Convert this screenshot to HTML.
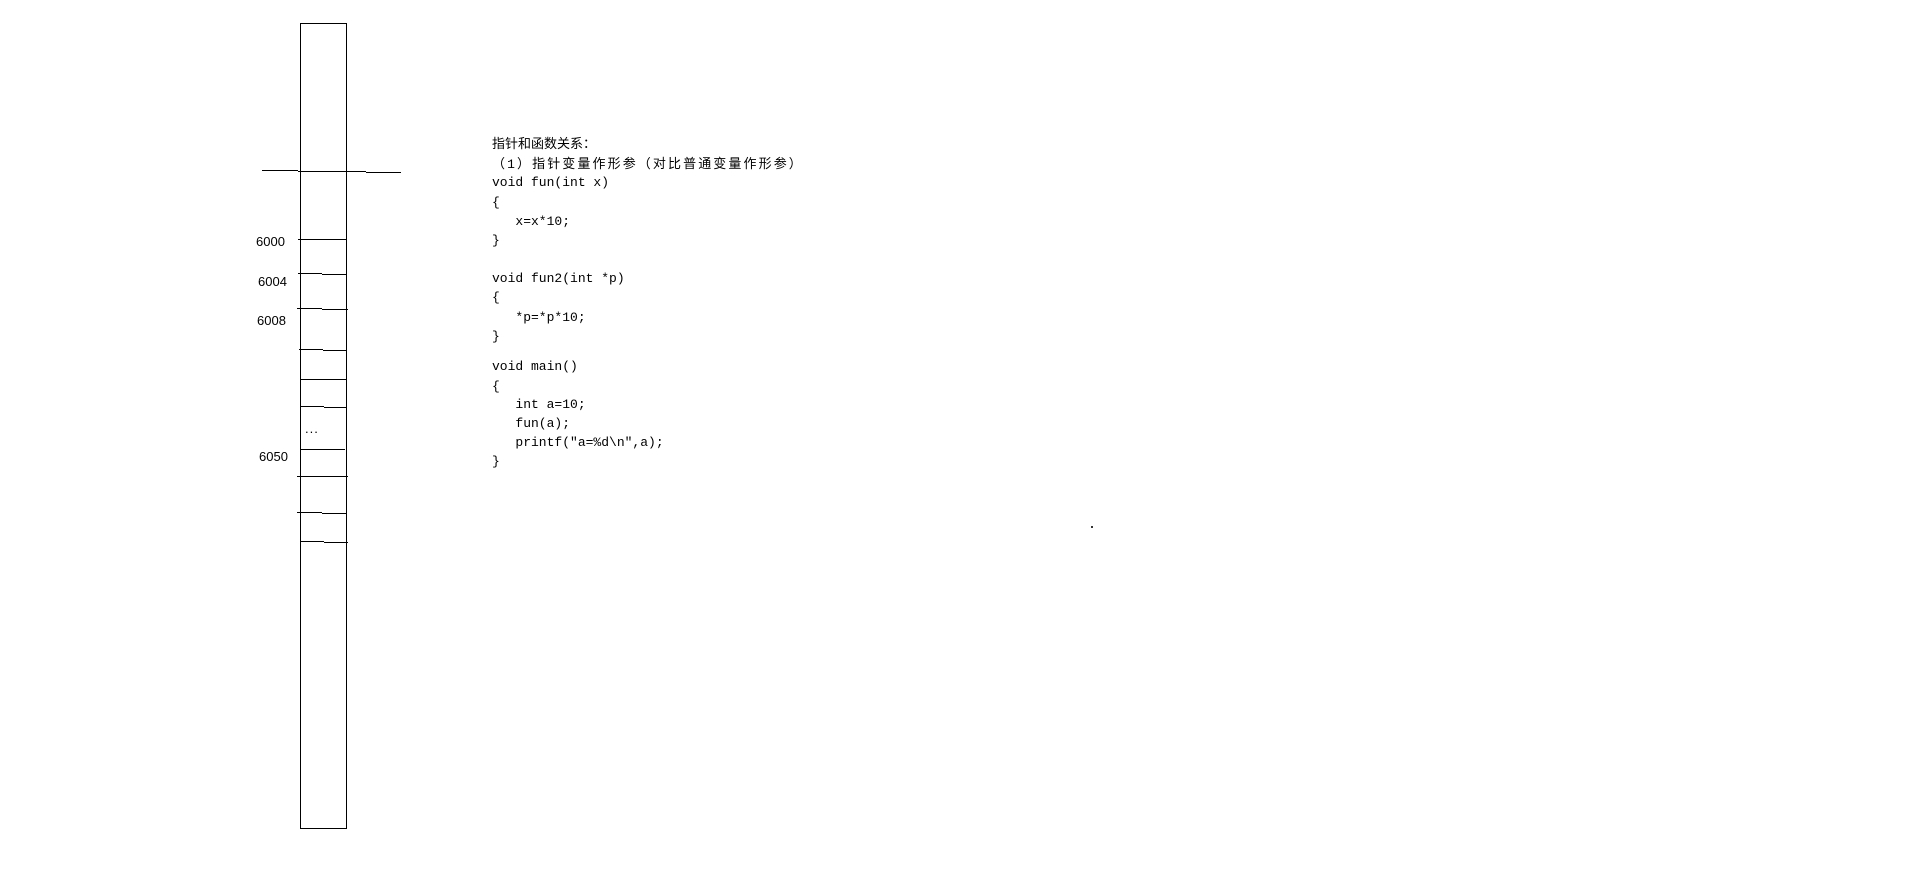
<!DOCTYPE html>
<html><head><meta charset="utf-8"><style>
html,body{margin:0;padding:0;background:#fff;}
body{width:1910px;height:869px;position:relative;overflow:hidden;}
.l{position:absolute;background:#000;height:1px;}
.v{position:absolute;background:#000;width:1px;}
.lab{position:absolute;font:13px "Liberation Sans",sans-serif;color:#000;line-height:14px;}
.t{position:absolute;left:492px;font:13px "Liberation Mono","Noto Sans CJK SC",monospace;color:#000;line-height:14px;white-space:pre;}
</style></head><body>
<div class="v" style="left:300px;top:23px;height:805px"></div>
<div class="v" style="left:346px;top:23px;height:805px"></div>
<div class="l" style="left:300px;top:23px;width:47px"></div>
<div class="l" style="left:300px;top:828px;width:47px"></div>

<div class="l" style="left:262px;top:170px;width:36px"></div>
<div class="l" style="left:298px;top:171px;width:68px"></div>
<div class="l" style="left:366px;top:172px;width:35px"></div>

<div class="l" style="left:298px;top:239px;width:48px"></div>
<div class="l" style="left:298px;top:273px;width:24px"></div>
<div class="l" style="left:322px;top:274px;width:25px"></div>
<div class="l" style="left:297px;top:308px;width:25px"></div>
<div class="l" style="left:322px;top:309px;width:26px"></div>
<div class="l" style="left:299px;top:349px;width:24px"></div>
<div class="l" style="left:323px;top:350px;width:24px"></div>
<div class="l" style="left:300px;top:379px;width:46px"></div>
<div class="l" style="left:300px;top:406px;width:24px"></div>
<div class="l" style="left:324px;top:407px;width:23px"></div>
<div class="l" style="left:300px;top:449px;width:45px"></div>
<div class="l" style="left:297px;top:476px;width:51px"></div>
<div class="l" style="left:297px;top:512px;width:25px"></div>
<div class="l" style="left:322px;top:513px;width:25px"></div>
<div class="l" style="left:300px;top:541px;width:24px"></div>
<div class="l" style="left:324px;top:542px;width:24px"></div>

<div class="lab" style="left:256px;top:235px">6000</div>
<div class="lab" style="left:258px;top:275px">6004</div>
<div class="lab" style="left:257px;top:314px">6008</div>
<div class="lab" style="left:259px;top:450px">6050</div>
<div class="lab" style="left:305px;top:422px;letter-spacing:1px">...</div>

<div class="t" style="top:138px">指针和函数关系：</div>
<div class="t" style="top:158px;letter-spacing:2.1px">（1）指针变量作形参（对比普通变量作形参）</div>
<div class="t" style="top:176px">void fun(int x)</div>
<div class="t" style="top:196px">{</div>
<div class="t" style="top:215px">   x=x*10;</div>
<div class="t" style="top:234px">}</div>
<div class="t" style="top:272px">void fun2(int *p)</div>
<div class="t" style="top:291px">{</div>
<div class="t" style="top:311px">   *p=*p*10;</div>
<div class="t" style="top:330px">}</div>
<div class="t" style="top:360px">void main()</div>
<div class="t" style="top:380px">{</div>
<div class="t" style="top:398px">   int a=10;</div>
<div class="t" style="top:417px">   fun(a);</div>
<div class="t" style="top:436px">   printf("a=%d\n",a);</div>
<div class="t" style="top:455px">}</div>

<div style="position:absolute;left:1091px;top:526px;width:2px;height:2px;background:#333"></div>
</body></html>
